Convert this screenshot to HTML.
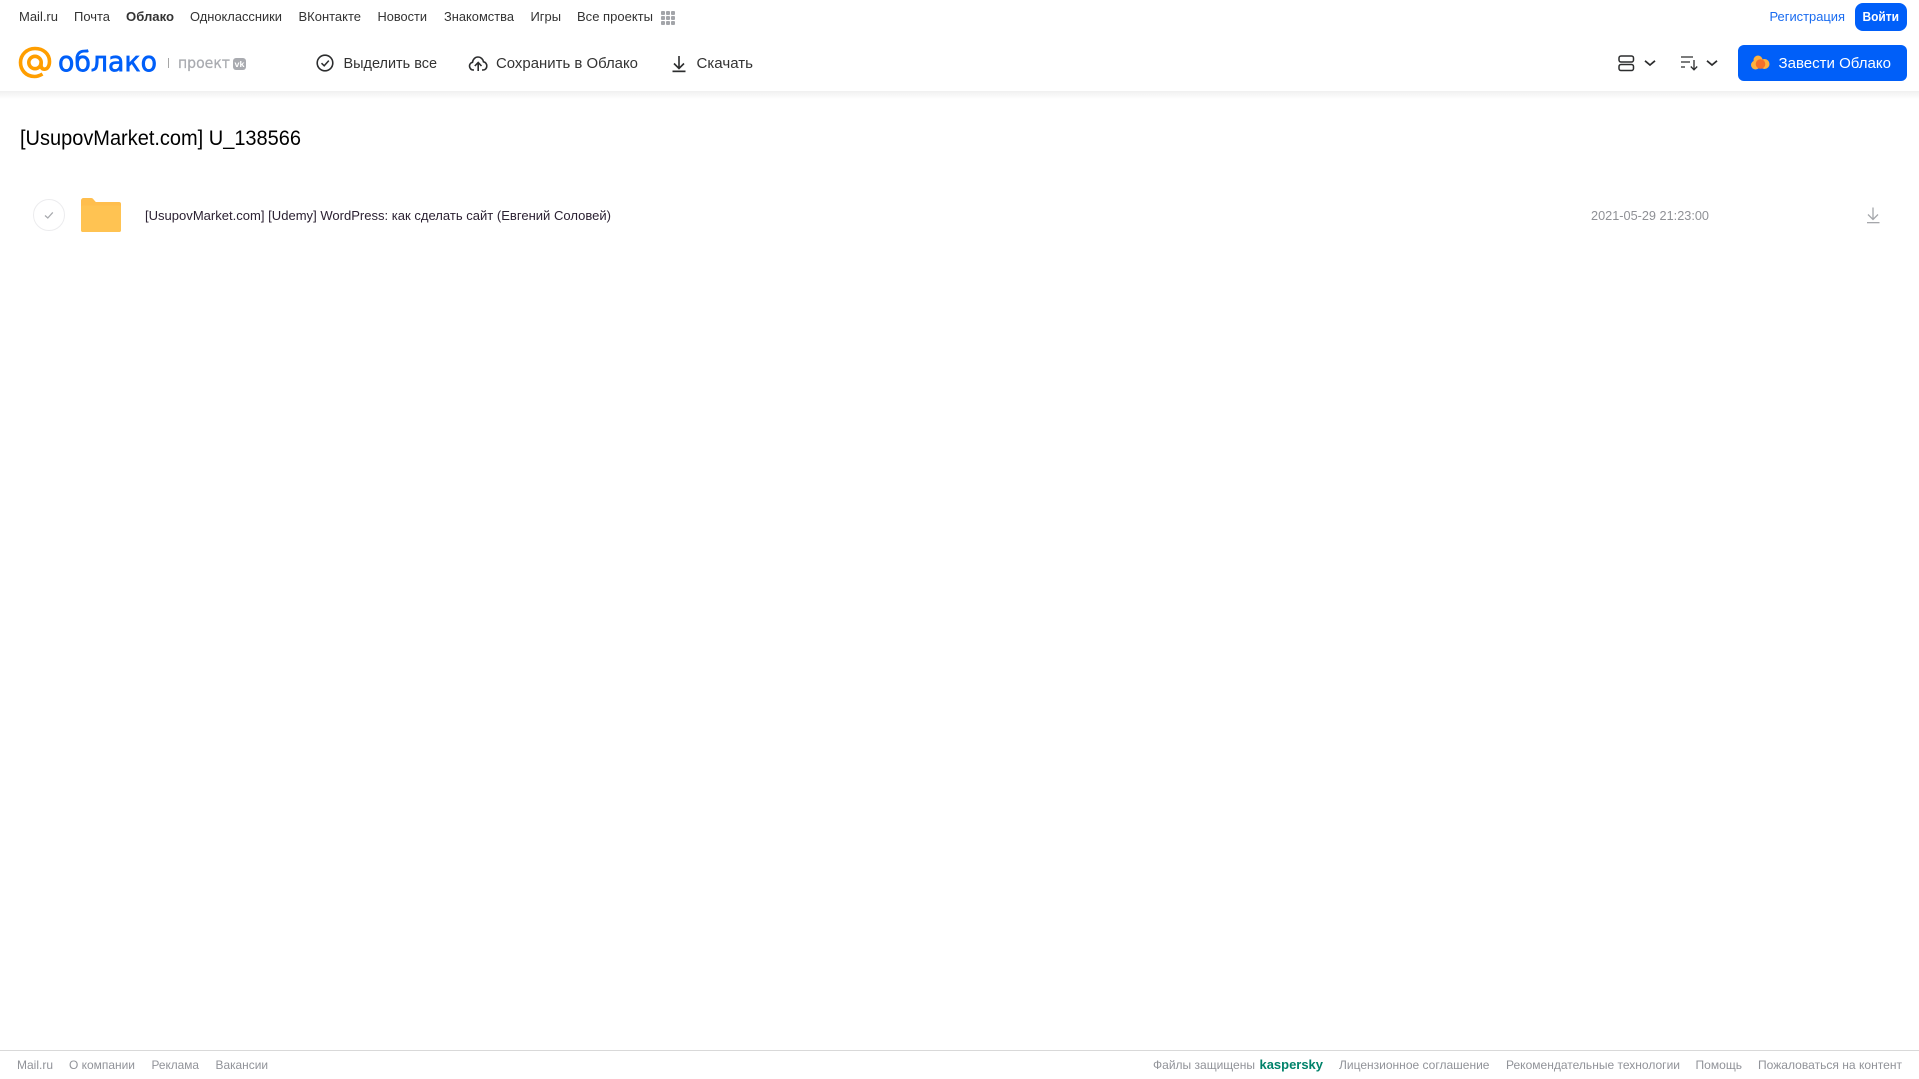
<!DOCTYPE html>
<html lang="ru"><head><meta charset="utf-8"><title>Облако</title>
<style>
html,body{margin:0;padding:0;background:#fff;width:1919px;height:1079px;overflow:hidden}
svg{display:block;position:absolute;left:0;top:0}
text{font-family:"Liberation Sans","Noto Sans CJK SC",sans-serif}
.n{font-size:13px;fill:#333}
.h{font-size:15px;fill:#333}
.f{font-size:12px;fill:#919399}
</style></head><body>
<svg width="1919" height="1079" viewBox="0 0 1919 1079" xmlns="http://www.w3.org/2000/svg">
<defs>
<linearGradient id="s" x1="0" y1="0" x2="0" y2="1"><stop offset="0" stop-color="#f0f0f0"/><stop offset="1" stop-color="#fff"/></linearGradient>
</defs>
<rect x="0" y="91" width="1919" height="8" fill="url(#s)"/>

<text class="n" x="19" y="21" textLength="39" lengthAdjust="spacingAndGlyphs">Mail.ru</text>
<text class="n" x="74" y="21" textLength="36" lengthAdjust="spacingAndGlyphs">Почта</text>
<text class="n" x="126" y="21" textLength="48" lengthAdjust="spacingAndGlyphs" font-weight="700">Облако</text>
<text class="n" x="190" y="21" textLength="92" lengthAdjust="spacingAndGlyphs">Одноклассники</text>
<text class="n" x="298.500" y="21" textLength="62.500" lengthAdjust="spacingAndGlyphs">ВКонтакте</text>
<text class="n" x="377.500" y="21" textLength="49.500" lengthAdjust="spacingAndGlyphs">Новости</text>
<text class="n" x="444" y="21" textLength="70" lengthAdjust="spacingAndGlyphs">Знакомства</text>
<text class="n" x="530.500" y="21" textLength="30.500" lengthAdjust="spacingAndGlyphs">Игры</text>
<text class="n" x="577" y="21" textLength="76" lengthAdjust="spacingAndGlyphs">Все проекты</text>
<g fill="#a3a5a9">
<rect x="661" y="11" width="4" height="4" rx="1"/><rect x="666" y="11" width="4" height="4" rx="1"/><rect x="671" y="11" width="4" height="4" rx="1"/>
<rect x="661" y="16" width="4" height="4" rx="1"/><rect x="666" y="16" width="4" height="4" rx="1"/><rect x="671" y="16" width="4" height="4" rx="1"/>
<rect x="661" y="21" width="4" height="4" rx="1"/><rect x="666" y="21" width="4" height="4" rx="1"/><rect x="671" y="21" width="4" height="4" rx="1"/>
</g>

<text x="1769.500" y="21" font-size="13" fill="#1a6cf0" textLength="75.500" lengthAdjust="spacingAndGlyphs">Регистрация</text>
<rect x="1855" y="3" width="52" height="28" rx="8" fill="#005ff9"/>
<text x="1862.500" y="21" font-size="13" font-weight="700" fill="#fff" textLength="36.500" lengthAdjust="spacingAndGlyphs">Войти</text>

<!-- logo -->
<g fill="none" stroke="#ff9e00" stroke-width="3.600">
<path d="M42.500 74C39.500 75.800 37.300 76.500 34.500 76.500C25.500 76.500 20.500 69.500 20.500 62.500C20.500 54.500 27 48.500 35 48.500C43.500 48.500 49.500 54 49.500 61.500C49.500 66 47.500 69.200 44.500 69.200C41.800 69.200 41 67.200 41 64.500V62.500"/>
<circle cx="35" cy="62.500" r="6.200"/>
</g>
<text x="58" y="71" font-size="28" fill="#005ff9" stroke="#005ff9" stroke-width="0.700" style="font-family:'DejaVu Sans',sans-serif" textLength="99" lengthAdjust="spacingAndGlyphs">облако</text>
<rect x="168" y="58" width="1" height="10" fill="#a6a6a6"/>
<text x="178" y="68" font-size="15" fill="#a9abb0" stroke="#a9abb0" stroke-width="0.250" style="font-family:'DejaVu Sans',sans-serif" textLength="52" lengthAdjust="spacingAndGlyphs">проект</text>
<rect x="233" y="58" width="13" height="12" rx="3" fill="#a9abb0"/>
<text x="234.500" y="67" font-size="8" font-weight="700" fill="#fff" textLength="10" lengthAdjust="spacingAndGlyphs">vk</text>

<!-- select all -->
<circle cx="325" cy="63" r="7.800" fill="none" stroke="#2c2d2e" stroke-width="1.600"/>
<path d="M321.500 63.200L324.200 65.800L328.800 60.600" fill="none" stroke="#2c2d2e" stroke-width="1.500"/>
<text class="h" x="343.500" y="68" textLength="93.500" lengthAdjust="spacingAndGlyphs">Выделить все</text>

<!-- cloud upload -->
<path d="M474 70H473C470.800 70 469.500 67.800 469.500 66C469.500 64 471 62.600 472.500 62.300C473 59 475.300 57 478 57C480.700 57 483 59 483.500 61.800C485.500 62 486.800 64 486.800 66C486.800 68 485.500 70 483 70H482" fill="none" stroke="#2c2d2e" stroke-width="1.600"/>
<path d="M478.200 71V62.800M474.800 66L478.200 62.500L481.500 66" fill="none" stroke="#2c2d2e" stroke-width="1.600"/>
<text class="h" x="496" y="68" textLength="142" lengthAdjust="spacingAndGlyphs">Сохранить в Облако</text>

<!-- download -->
<path d="M679 56V68M674 63.500L679 68.500L684 63.500" fill="none" stroke="#2c2d2e" stroke-width="1.600"/>
<rect x="672.500" y="70.500" width="13" height="1.700" fill="#2c2d2e"/>
<text class="h" x="696.500" y="68" textLength="56.500" lengthAdjust="spacingAndGlyphs">Скачать</text>

<!-- view -->
<rect x="1619" y="56" width="14.500" height="6" rx="2" fill="none" stroke="#2c2d2e" stroke-width="1.500"/>
<rect x="1619" y="64.500" width="14.500" height="6" rx="2" fill="none" stroke="#2c2d2e" stroke-width="1.500"/>
<path d="M1645 60.800L1650 65L1655 60.800" fill="none" stroke="#2c2d2e" stroke-width="1.700"/>
<!-- sort -->
<path d="M1681 57H1693M1681 62H1690M1681 67H1685" fill="none" stroke="#2c2d2e" stroke-width="1.300"/>
<path d="M1694 60V69.500M1690.800 66.500L1694 69.800L1697.200 66.500" fill="none" stroke="#2c2d2e" stroke-width="1.300"/>
<path d="M1707 60.800L1712 65L1717 60.800" fill="none" stroke="#2c2d2e" stroke-width="1.700"/>

<!-- get cloud -->
<rect x="1738" y="45" width="169" height="36" rx="6" fill="#005ff9"/>
<circle cx="1755.500" cy="65" r="4.500" fill="#ffb13d"/>
<circle cx="1758" cy="60" r="4.500" fill="#ffb13d"/>
<circle cx="1764.500" cy="64" r="5" fill="#ffb13d"/>
<circle cx="1760.500" cy="64" r="4.800" fill="#f4702a"/>
<text x="1778.500" y="68" font-size="15" fill="#fff" textLength="112.500" lengthAdjust="spacingAndGlyphs">Завести Облако</text>

<!-- title -->
<text x="20" y="145" font-size="21" fill="#000" textLength="281" lengthAdjust="spacingAndGlyphs">[UsupovMarket.com] U_138566</text>

<!-- row -->
<circle cx="49" cy="215" r="15.500" fill="#fff" stroke="#ececee" stroke-width="1"/>
<path d="M45 215.500L47.800 218L52.800 212.400" fill="none" stroke="#a8aaae" stroke-width="1.300"/>
<path d="M81 200.500a2.500 2.500 0 0 1 2.500-2.500H91c1.500 0 2 .7 3 2l1.800 2H119a2 2 0 0 1 2 2V230a2 2 0 0 1-2 2H83a2 2 0 0 1-2-2Z" fill="#ffbe4d"/>
<path d="M81 207.500a2 2 0 0 1 2-2H119a2 2 0 0 1 2 2V230a2 2 0 0 1-2 2H83a2 2 0 0 1-2-2Z" fill="#ffc352"/>
<text x="145" y="220" font-size="13" fill="#2c2233" textLength="466" lengthAdjust="spacingAndGlyphs">[UsupovMarket.com] [Udemy] WordPress: как сделать сайт (Евгений Соловей)</text>
<text x="1591" y="220" font-size="13" fill="#8f9196" textLength="118" lengthAdjust="spacingAndGlyphs">2021-05-29 21:23:00</text>
<path d="M1873 207.500V219.500M1868 214.500L1873 219.500L1878 214.500" fill="none" stroke="#a5a7ab" stroke-width="1.300"/>
<rect x="1867" y="222" width="12.500" height="1.300" fill="#a5a7ab"/>

<!-- footer -->
<rect x="0" y="1050" width="1919" height="1" fill="#d9d9d9"/>
<text class="f" x="17" y="1069" textLength="36" lengthAdjust="spacingAndGlyphs">Mail.ru</text>
<text class="f" x="69" y="1069" textLength="66" lengthAdjust="spacingAndGlyphs">О компании</text>
<text class="f" x="151.500" y="1069" textLength="47.500" lengthAdjust="spacingAndGlyphs">Реклама</text>
<text class="f" x="215.500" y="1069" textLength="52.500" lengthAdjust="spacingAndGlyphs">Вакансии</text>
<text class="f" x="1153" y="1069" textLength="102" lengthAdjust="spacingAndGlyphs">Файлы защищены</text>
<text x="1259.500" y="1069" font-size="13" font-weight="700" fill="#00826a" textLength="63.500" lengthAdjust="spacingAndGlyphs">kaspersky</text>
<text class="f" x="1339" y="1069" textLength="150.500" lengthAdjust="spacingAndGlyphs">Лицензионное соглашение</text>
<text class="f" x="1506" y="1069" textLength="174" lengthAdjust="spacingAndGlyphs">Рекомендательные технологии</text>
<text class="f" x="1695.500" y="1069" textLength="46.500" lengthAdjust="spacingAndGlyphs">Помощь</text>
<text class="f" x="1758" y="1069" textLength="144" lengthAdjust="spacingAndGlyphs">Пожаловаться на контент</text>
</svg>
</body></html>
